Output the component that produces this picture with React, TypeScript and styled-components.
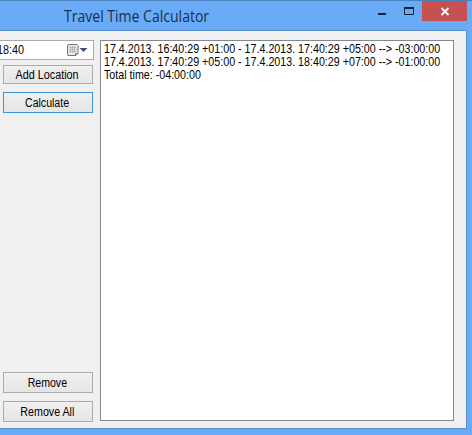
import React from "react";
import styled, { createGlobalStyle } from "styled-components";

const GlobalStyle = createGlobalStyle`
  * { box-sizing: border-box; }
  body { margin: 0; overflow: hidden; }
`;

const Window = styled.div`
  width: 472px;
  height: 435px;
  display: flex;
  flex-direction: column;
  background: #6aabf7;
  border-top: 1px solid #4a82bd;
  font: 12px/13px "Liberation Sans", Arial, sans-serif;
  color: #000;
`;

const TitleBar = styled.header`
  height: 29px;
  display: flex;
  padding-right: 5px;
`;

const Title = styled.h1`
  margin: 0 0 0 64px;
  flex: 1;
  padding: 5px 0 0;
  font: 400 15.5px/21px "Open Sans", "Noto Sans", sans-serif;
  transform: scaleX(0.905);
  transform-origin: left;
  white-space: nowrap;
  color: #16304c;
`;

const CaptionButton = styled.button<{ $width: number; $close?: boolean }>`
  width: ${(p) => p.$width}px;
  height: 20px;
  padding: 0;
  border: 0;
  background: ${(p) => (p.$close ? "#c75050" : "transparent")};

  svg {
    display: block;
  }
`;

const Client = styled.main`
  width: 467px;
  height: 399px;
  display: flex;
  gap: 7px;
  padding: 9px 0 0;
  background: #f0f0f0;
  border: solid #5d8fcb;
  border-width: 1px 1px 1px 0;
`;

const Sidebar = styled.aside`
  width: 93px;
  height: 382px;
  display: flex;
  flex-direction: column;
`;

const TimePicker = styled.div`
  width: 94px;
  height: 20px;
  display: flex;
  align-items: center;
  justify-content: space-between;
  background: #fff;
  border: 1px solid #ababab;
  border-left: 0;
  padding-right: 5px;
  overflow: hidden;
`;

const TimeValue = styled.span`
  margin-left: -3px;
  transform: scaleX(0.9);
  transform-origin: left;
`;

const PushButton = styled.button<{
  $top: number | "auto";
  $height?: number;
  $primary?: boolean;
}>`
  width: 90px;
  height: ${(p) => p.$height ?? 21}px;
  flex: none;
  display: flex;
  align-items: center;
  justify-content: center;
  margin: ${(p) => (p.$top === "auto" ? "auto" : `${p.$top}px`)} 0 0 3px;
  padding: 1px 2px 0 0;
  border: 1px solid ${(p) => (p.$primary ? "#3c93dc" : "#acacac")};
  background: linear-gradient(#f0f0f0, #e5e5e5);
  font: 12px/13px "Liberation Sans", Arial, sans-serif;
  color: #000;
`;

const ButtonLabel = styled.span<{ $scale: number }>`
  flex: none;
  white-space: nowrap;
  transform: scaleX(${(p) => p.$scale});
`;

const Output = styled.section`
  width: 354px;
  height: 381px;
  padding: 2px 0 0 3px;
  background: #fff;
  border: 1px solid #828790;
`;

const Line = styled.div`
  height: 13px;
  white-space: pre;
  transform: scaleX(0.891);
  transform-origin: left;
`;

function PickerIcon() {
  return (
    <svg width="21" height="13" viewBox="0 0 21 13">
      <path d="M1 .5h9l1 1v8l-2 2H1l-.5-.5V1z" fill="#e6e8ec" stroke="#77747a" />
      <path d="M8.5 11.5v-2h2" fill="none" stroke="#77747a" />
      <path d="M2 3.5h7M2 5.5h7M2 7.5h7M3.5 2v7M5.5 2v7M7.5 2v7" stroke="#a6abb6" strokeWidth=".7" />
      <path d="M12.5 4h8l-4 4z" fill="#415174" />
    </svg>
  );
}

export default function App() {
  return (
    <>
      <GlobalStyle />
      <Window>
        <TitleBar>
          <Title>Travel Time Calculator</Title>
          <CaptionButton $width={28} aria-label="Minimize">
            <svg width="28" height="20"><path d="M11 12h8v2h-8z" fill="#132238" /></svg>
          </CaptionButton>
          <CaptionButton $width={27} aria-label="Maximize">
            <svg width="27" height="20">
              <path d="M9.5 6.5h9v7h-9z" fill="none" stroke="#132238" />
              <path d="M9 6h10v2H9z" fill="#132238" />
            </svg>
          </CaptionButton>
          <CaptionButton $width={45} $close aria-label="Close">
            <svg width="45" height="20"><path d="M19.5 7l7 7m0-7l-7 7" stroke="#fff" strokeWidth="1.8" /></svg>
          </CaptionButton>
        </TitleBar>
        <Client>
          <Sidebar>
            <TimePicker>
              <TimeValue>18:40</TimeValue>
              <PickerIcon />
            </TimePicker>
            <PushButton $top={5} $height={19}>
              <ButtonLabel $scale={0.9}>Add Location</ButtonLabel>
            </PushButton>
            <PushButton $top={8} $primary>
              <ButtonLabel $scale={0.88}>Calculate</ButtonLabel>
            </PushButton>
            <PushButton $top="auto">
              <ButtonLabel $scale={0.88}>Remove</ButtonLabel>
            </PushButton>
            <PushButton $top={8}>
              <ButtonLabel $scale={0.89}>Remove All</ButtonLabel>
            </PushButton>
          </Sidebar>
          <Output>
            <Line>{"17.4.2013. 16:40:29 +01:00 - 17.4.2013. 17:40:29 +05:00 --> -03:00:00"}</Line>
            <Line>{"17.4.2013. 17:40:29 +05:00 - 17.4.2013. 18:40:29 +07:00 --> -01:00:00"}</Line>
            <Line>Total time: -04:00:00</Line>
          </Output>
        </Client>
      </Window>
    </>
  );
}
